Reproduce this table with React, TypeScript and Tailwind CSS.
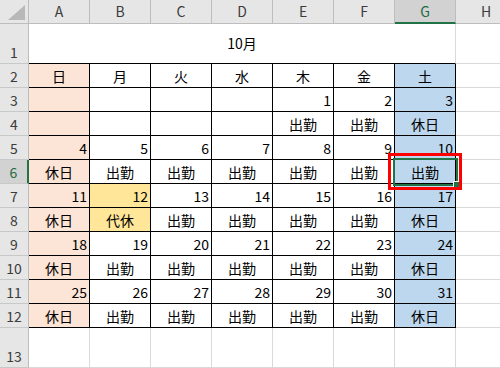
import React from 'react'

const COLS = ['A', 'B', 'C', 'D', 'E', 'F', 'G', 'H']
const WEEK = ['日', '月', '火', '水', '木', '金', '土']

type Val = string | number | null

// rows 3..12 of the calendar block (A..G)
const BODY: Val[][] = [
  [null, null, null, null, 1, 2, 3],
  [null, null, null, null, '出勤', '出勤', '休日'],
  [4, 5, 6, 7, 8, 9, 10],
  ['休日', '出勤', '出勤', '出勤', '出勤', '出勤', '出勤'],
  [11, 12, 13, 14, 15, 16, 17],
  ['休日', '代休', '出勤', '出勤', '出勤', '出勤', '休日'],
  [18, 19, 20, 21, 22, 23, 24],
  ['休日', '出勤', '出勤', '出勤', '出勤', '出勤', '休日'],
  [25, 26, 27, 28, 29, 30, 31],
  ['休日', '出勤', '出勤', '出勤', '出勤', '出勤', '休日'],
]

const font = "font-['Noto_Sans_CJK_JP','Noto_Sans',sans-serif]"

function fill(row: number, col: number) {
  if (col === 0) return 'bg-[#fce4d6]'
  if (col === 6) return 'bg-[#bdd7ee]'
  if (col === 1 && (row === 7 || row === 8)) return 'bg-[#ffe699]'
  return 'bg-white'
}

function RowHead({ n, active }: { n: number; active?: boolean }) {
  return (
    <div
      className={`flex items-end justify-center pb-[2px] text-[14px] leading-[18px] border-b border-b-[#c8c8c8] ${
        active
          ? 'bg-[#d2d2d2] text-[#1d6b40] border-r-2 border-r-[#217346]'
          : 'bg-[#e6e6e6] text-[#3c3c3c] border-r border-r-[#bdbdbd]'
      }`}
    >
      {n}
    </div>
  )
}

function Cell({ v, row, col }: { v: Val; row: number; col: number }) {
  const isNum = typeof v === 'number'
  return (
    <div
      className={`flex items-center text-[14px] leading-[18px] text-black border-r border-b border-black ${fill(row, col)} ${
        isNum ? 'justify-end pr-[2px]' : 'justify-center'
      }`}
    >
      {v}
    </div>
  )
}

function Blank() {
  return <div className="bg-white border-r border-b border-[#d9d9d9]" />
}

export default function App() {
  return (
    <div className={`relative w-[500px] h-[368px] overflow-hidden bg-white ${font}`}>
      <div className="grid grid-cols-[29px_repeat(8,61px)] grid-rows-[24px_40px_repeat(11,24px)_40px]">
        {/* corner */}
        <div className="bg-[#e6e6e6] border-r border-b border-[#bdbdbd]">
          <svg width="28" height="23" viewBox="0 0 28 23">
            <polygon points="8,20 25,20 25,5" fill="#b8b8b8" />
          </svg>
        </div>
        {COLS.map((c) => (
          <div
            key={c}
            className={`flex items-center justify-center text-[14px] ${
              c === 'G'
                ? 'bg-[#d2d2d2] text-[#1d6b40] border-b-2 border-b-[#217346] border-r border-r-[#bdbdbd]'
                : 'bg-[#e6e6e6] text-[#3c3c3c] border-r border-b border-[#bdbdbd]'
            }`}
          >
            {c}
          </div>
        ))}

        {/* row 1: title merged over A:G */}
        <RowHead n={1} />
        <div className="col-span-7 flex items-center justify-center text-[14px] text-black border-b border-b-black border-r border-r-[#d9d9d9]">
          10月
        </div>
        <Blank />

        {/* row 2: weekdays */}
        <RowHead n={2} />
        {WEEK.map((w, i) => (
          <Cell key={w} v={w} row={2} col={i} />
        ))}
        <Blank />

        {BODY.map((r, ri) => {
          const row = ri + 3
          return (
            <React.Fragment key={row}>
              <RowHead n={row} active={row === 6} />
              {r.map((v, ci) => (
                <Cell key={ci} v={v} row={row} col={ci} />
              ))}
              <Blank />
            </React.Fragment>
          )
        })}

        {/* row 13 */}
        <RowHead n={13} />
        {COLS.map((c) => (
          <Blank key={c} />
        ))}
      </div>

      {/* active cell G6 */}
      <div className="absolute left-[393px] top-[158px] w-[65px] h-[28px] border-2 border-[#217346]" />
      <div className="absolute left-[453px] top-[181px] w-[7px] h-[7px] bg-[#217346] border border-white" />

      {/* red highlight box */}
      <div className="absolute left-[388px] top-[153px] w-[74px] h-[37px] border-[3px] border-[#ff0000]" />
    </div>
  )
}
